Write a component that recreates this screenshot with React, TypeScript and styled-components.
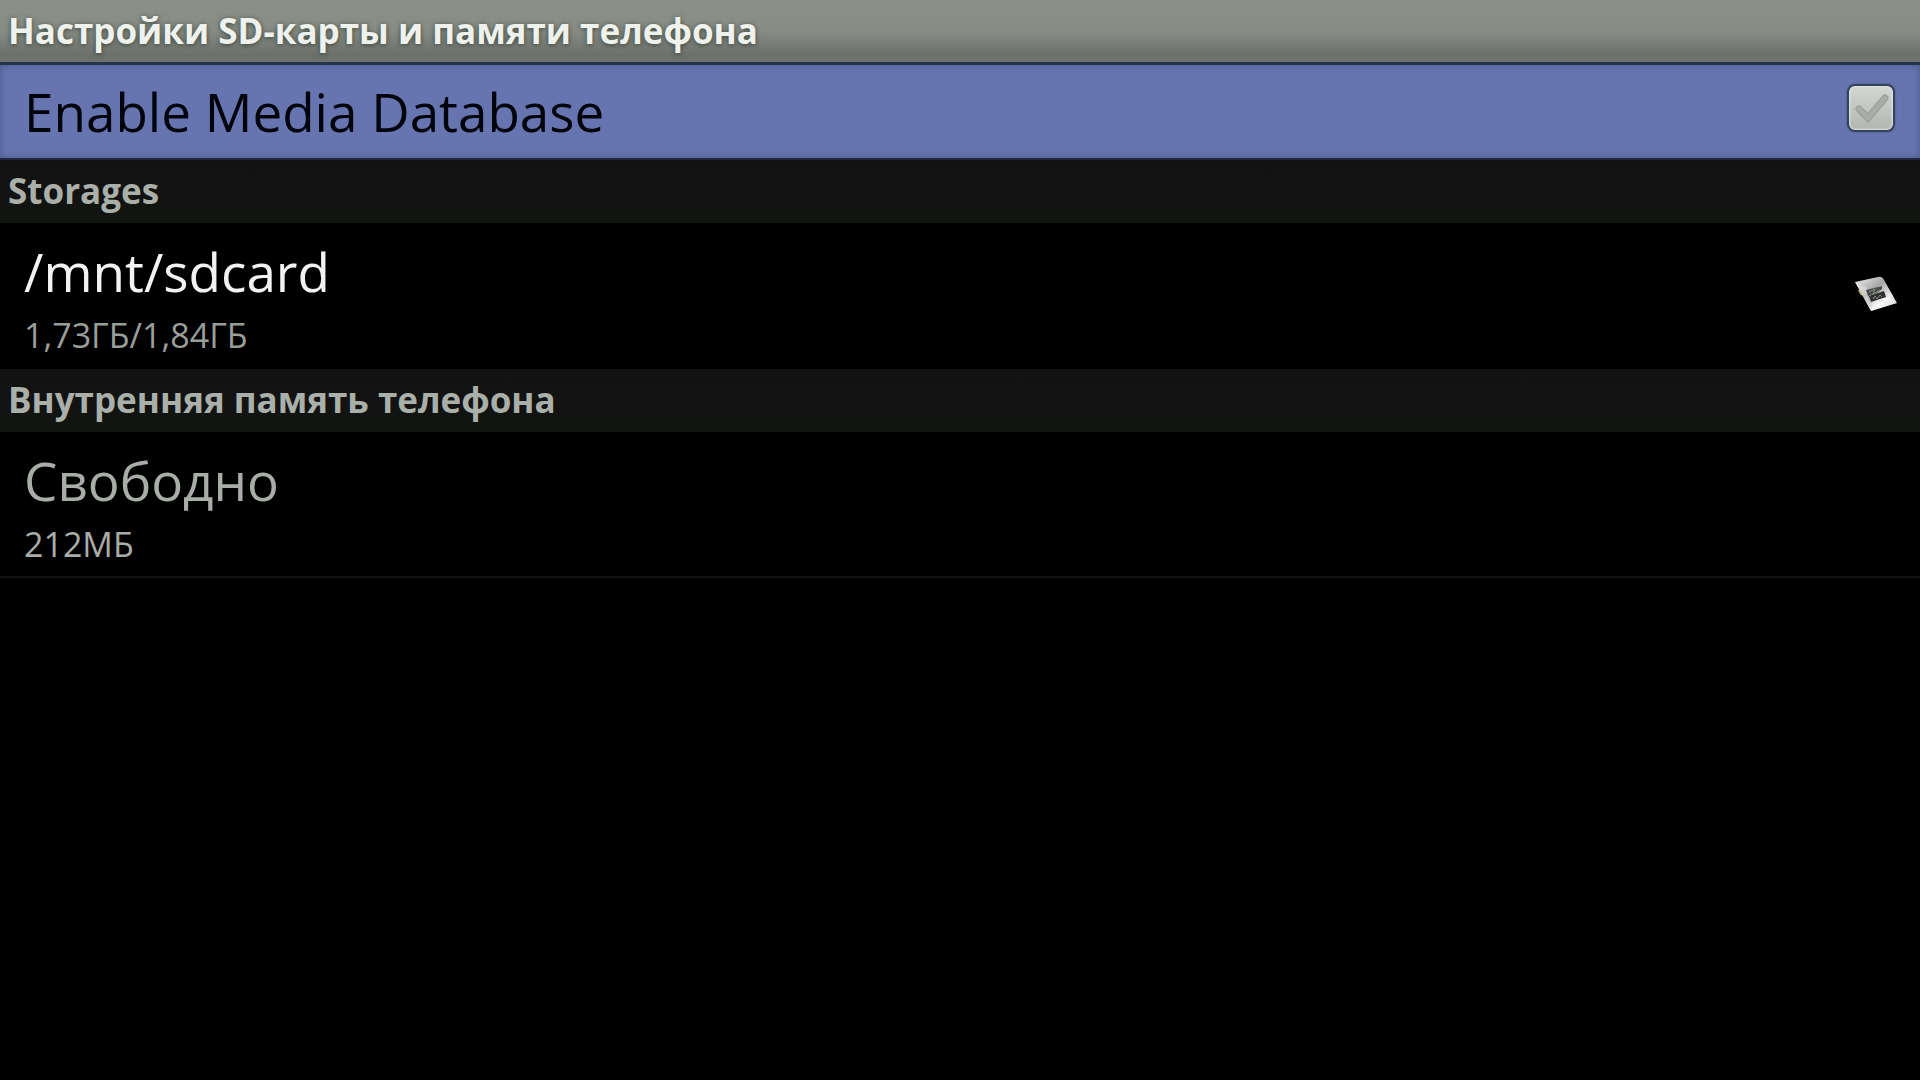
import React, { useState } from "react";
import styled, { createGlobalStyle } from "styled-components";

const GlobalStyle = createGlobalStyle`
  *, *::before, *::after { box-sizing: border-box; }
  body {
    margin: 0;
    background: #000;
    font-family: "Open Sans", "Noto Sans", sans-serif;
  }
`;

const Screen = styled.main`
  min-height: 100vh;
  display: flex;
  flex-direction: column;
  background: #000;
`;

const TitleBar = styled.header`
  padding: 7px 8px;
  background: linear-gradient(#8b9089 0%, #878c85 50%, #6d706b 88%, #6f726d 100%);
`;

const Title = styled.h1`
  margin: 0;
  font-size: 35px;
  line-height: 48px;
  font-weight: 700;
  color: #eef1ec;
  text-shadow: 0 1px 5px rgba(40, 52, 40, 0.8);
`;

const ToggleRow = styled.label`
  display: flex;
  align-items: center;
  justify-content: space-between;
  padding: 6px 25px 5px 24px;
  border-top: 3px solid #26344a;
  border-bottom: 2px solid #1f2740;
  background: #6675af;
  box-shadow: inset 0 0 6px 1px #4f5d92;
  cursor: pointer;
`;

const Primary = styled.span<{ $color: string }>`
  font-size: 53px;
  line-height: 82px;
  color: ${(p) => p.$color};
`;

const Secondary = styled.span<{ $color: string }>`
  font-size: 34px;
  line-height: 44px;
  color: ${(p) => p.$color};
`;

const CheckWrap = styled.span`
  display: grid;
  width: 48px;
  height: 48px;
  margin-bottom: 8px;

  > * { grid-area: 1 / 1; }
`;

const CheckBox = styled.input`
  appearance: none;
  width: 48px;
  height: 48px;
  margin: 0;
  border: 2px solid #35425f;
  border-radius: 8px;
  background: linear-gradient(#d3d7d3, #bfc4bf 60%, #b0b5b0);
  box-shadow: inset 0 0 2px 1px #e2e5e2, 0 0 2px #3a4770;
  cursor: pointer;
`;

const CheckMark = styled.svg<{ $on: boolean }>`
  width: 48px;
  height: 48px;
  pointer-events: none;
  color: ${(p) => (p.$on ? "#4f9a2d" : "#a9ada9")};
`;

const SectionHeading = styled.h2`
  margin: 0;
  padding: 7px 8px 8px;
  font-size: 35px;
  line-height: 48px;
  font-weight: 700;
  color: #aab0a9;
  background: linear-gradient(#121212 0%, #121312 60%, #111611 100%);
`;

const StorageRow = styled.div<{ $divider?: boolean }>`
  display: flex;
  align-items: center;
  justify-content: space-between;
  padding: 8px 22px 10px 24px;
  border-bottom: 2px solid ${(p) => (p.$divider ? "#111211" : "transparent")};
`;

const RowText = styled.div`
  display: flex;
  flex-direction: column;
`;

const CardSvg = styled.svg`
  width: 44px;
  height: 36px;
`;

function CardIcon() {
  return (
    <CardSvg viewBox="0 0 44 36" aria-hidden="true">
      <defs>
        <linearGradient id="card" x1="0" y1="0" x2="1" y2="1">
          <stop offset="0" stopColor="#f0f0f0" />
          <stop offset="0.4" stopColor="#a8a8a8" />
          <stop offset="0.7" stopColor="#efefef" />
          <stop offset="1" stopColor="#b5b5b5" />
        </linearGradient>
      </defs>
      <path d="M1 6 L24 1 Q28 0 30 4 L43 27 L17 35 Z" fill="url(#card)" />
      <path d="M1 6 L13 12 L14 25 L17 35 Z" fill="#f4f4f4" opacity="0.4" />
      <path d="M17 35 L19 25 L33 21 L43 27 Z" fill="#ffffff" opacity="0.4" />
      <path d="M5 14 L8 19" stroke="#c9c58a" strokeWidth="2" />
      <path d="M12 14 L28 10 L28 13 L23 17 L14 20 Z" fill="#4a4c4a" />
      <path d="M15 20 L30 15 L32 21 L17 26 Z" fill="#2e302e" />
      <path d="M15 16 L21 13 L19 18 L26 14 M19 23 L21 20 L23 23 L26 19 L28 21" fill="none" stroke="#858785" strokeWidth="1" />
    </CardSvg>
  );
}

export default function App() {
  const [enabled, setEnabled] = useState(false);
  return (
    <Screen>
      <GlobalStyle />
      <TitleBar>
        <Title>Настройки SD-карты и памяти телефона</Title>
      </TitleBar>
      <ToggleRow htmlFor="media-db">
        <Primary $color="#02040c">Enable Media Database</Primary>
        <CheckWrap>
          <CheckBox
            id="media-db"
            type="checkbox"
            checked={enabled}
            onChange={(e) => setEnabled(e.target.checked)}
          />
          <CheckMark $on={enabled} viewBox="0 0 48 48" aria-hidden="true">
            <path
              d="M12 25 L21 34 L38 14"
              fill="none"
              stroke="#999d99"
              strokeWidth="7"
              strokeLinecap="round"
            />
            <path
              d="M12 25 L21 34 L38 14"
              fill="none"
              stroke="currentColor"
              strokeWidth="5"
              strokeLinecap="round"
            />
          </CheckMark>
        </CheckWrap>
      </ToggleRow>
      <section>
        <SectionHeading>Storages</SectionHeading>
        <StorageRow>
          <RowText>
            <Primary $color="#f2f2f2">/mnt/sdcard</Primary>
            <Secondary $color="#9a9e99">1,73ГБ/1,84ГБ</Secondary>
          </RowText>
          <CardIcon />
        </StorageRow>
      </section>
      <section>
        <SectionHeading>Внутренняя память телефона</SectionHeading>
        <StorageRow $divider>
          <RowText>
            <Primary $color="#a9ada8">Свободно</Primary>
            <Secondary $color="#a9ada8">212МБ</Secondary>
          </RowText>
        </StorageRow>
      </section>
    </Screen>
  );
}
